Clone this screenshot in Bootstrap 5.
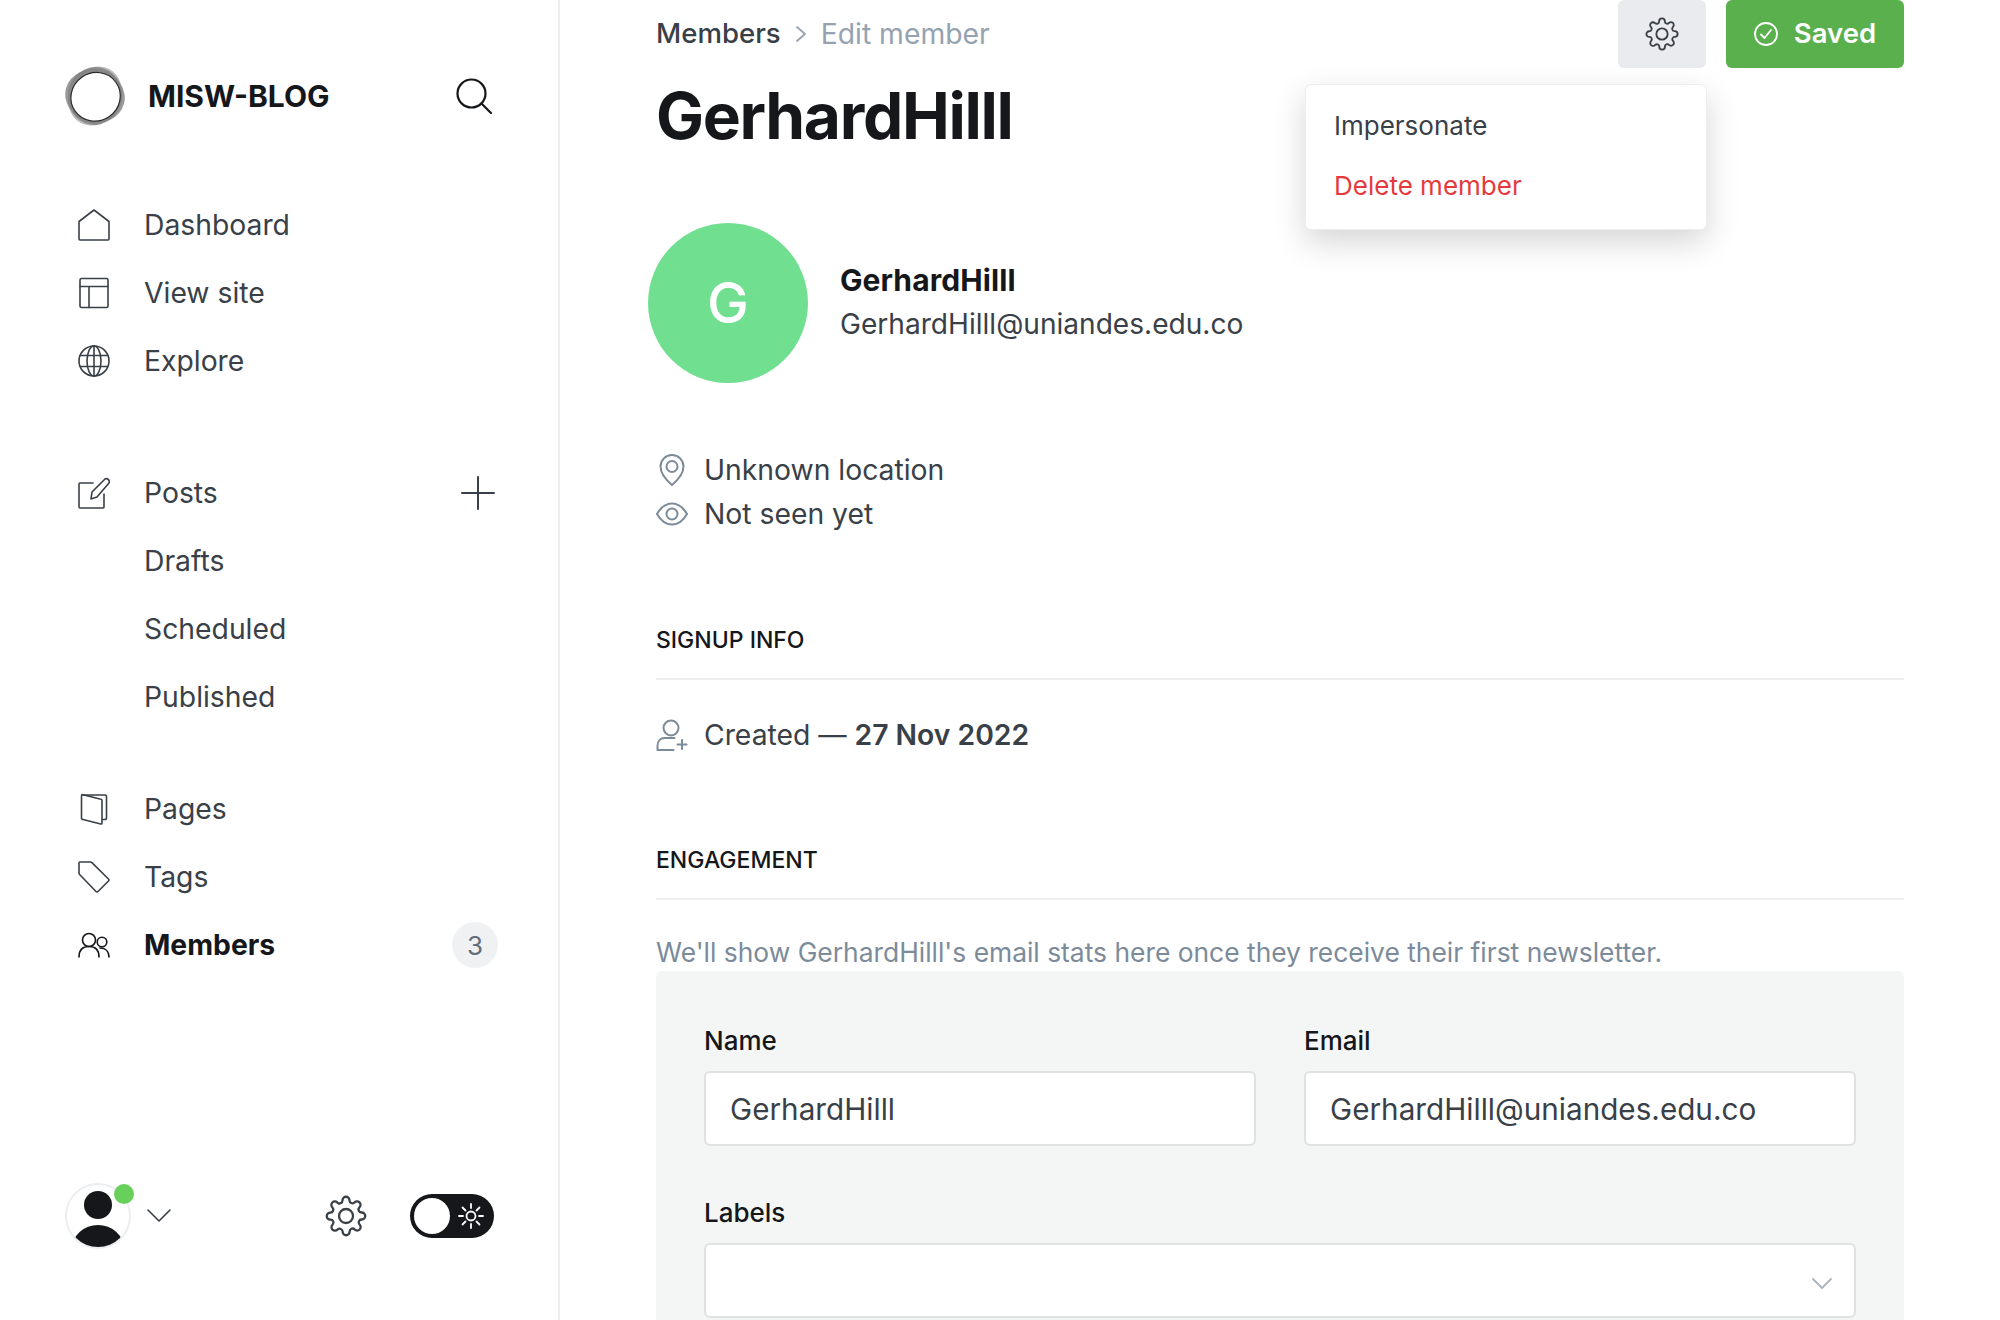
<!DOCTYPE html>
<html lang="en">
<head>
    <meta charset="UTF-8">
    <title>Edit member - MISW-BLOG</title>
    <link href="https://cdn.jsdelivr.net/npm/bootstrap@5.3.0/dist/css/bootstrap.min.css" rel="stylesheet">
    <script src="https://cdn.jsdelivr.net/npm/bootstrap@5.3.0/dist/js/bootstrap.bundle.min.js"></script>
    <style>
        html, body { height: 1320px; overflow: hidden; }
        body { font-family: Inter, "Liberation Sans", sans-serif; font-size: 28.3px; color: #394047; background: #fff; }
        svg { display: block; flex: none; }
        .ln { fill: none; stroke: currentColor; stroke-width: 1.6; stroke-linecap: round; stroke-linejoin: round; }

        .side { width: 560px; height: 1320px; border-right: 2px solid #eceef0; padding: 66px 60px 0 65px; }
        .brand { height: 60px; }
        .brand-name { font-size: 30px; font-weight: 700; color: #15171a; margin-left: 23px; }
        .brand-find { margin-right: 6px; }
        .side-nav { margin-top: 65px; }
        .side-group { margin-bottom: 64px; }
        .side-group + .side-group { margin-bottom: 44px; }
        .side-row { height: 68px; color: #394047; text-decoration: none; padding-left: 13px; }
        .side-row .ico { width: 32px; margin-right: 34px; color: #394047; }
        .side-row.sub { padding-left: 79px; }
        .side-row.now { font-weight: 700; color: #15171a; }
        .side-row.now .ico { color: #15171a; }
        .side-plus { margin-right: 3px; }
        .side-count { width: 46px; height: 46px; background: #eff1f3; color: #626d79; font-size: 26px; margin-right: 0; }
        .side-foot { height: 66px; margin-bottom: 71px; }
        .me { width: 66px; height: 66px; border: 2px solid #ebeef0; background: #fff; overflow: hidden; }
        .me-wrap { width: 66px; height: 66px; }
        .me-dot { width: 20px; height: 20px; background: #68cf5a; top: 1px; left: 49px; }
        .mode { width: 84px; height: 44px; background: #15171a; padding: 4px; margin-right: 4px; margin-left: 43px; }
        .mode-knob { width: 36px; height: 36px; background: #fff; }

        .page { padding: 0 96px 0 96px; }
        .top-bar { height: 68px; }
        .crumb-now { color: #394047; font-size: 27.6px; font-weight: 500; }
        .crumb-sep { color: #95a2b0; margin: 0 14px; }
        .crumb-end { color: #95a2b0; }
        .gear-btn { width: 88px; height: 68px; background: #e9ebee; border-radius: 6px; color: #394047; }
        .save-btn.btn { width: 178px; height: 68px; margin-left: 20px; background: #5bb04e; border-radius: 6px; color: #fff; font-weight: 600; font-size: 27.5px; }
        .actions { width: 402px; top: 84px; left: 1305px; height: 146px; background: #fff; border-radius: 6px; border: 1px solid #eceef0; box-shadow: 0 12px 32px rgba(0,0,0,.17); padding: 10px 28px; font-size: 26px; }
        .actions div { height: 60px; }
        .danger { color: #e43a3d; }
        .who-title { font-size: 64px; font-weight: 700; color: #15171a; letter-spacing: -1.3px; line-height: 1; margin-top: 16px; }
        .who { margin-top: 75px; margin-left: -8px; }
        .who-pic { width: 160px; height: 160px; background: #70df8f; color: #fff; font-size: 56px; font-weight: 500; margin-right: 32px; }
        .who-text { padding-bottom: 2px; }
        .who-name { font-size: 30px; font-weight: 700; color: #15171a; letter-spacing: .1px; line-height: 44px; }
        .who-mail { line-height: 44px; font-size: 28.1px; }
        .facts { margin-top: 65px; }
        .fact { height: 44px; }
        .fact .ico { width: 32px; margin-right: 16px; color: #7c8b9a; }
        .fact .ln { stroke-width: 2; }
        .sect { font-size: 23px; font-weight: 500; color: #15171a; line-height: 30px; padding-bottom: 23px; border-bottom: 2px solid #eceef0; }
        .sect-first { margin-top: 89px; }
        .sect-next { margin-top: 88px; }
        .fact-single { margin-top: 33px; }
        .hint { color: #7c8b9a; font-size: 26.4px; line-height: 38px; margin-top: 33px; }
        .form-box { background: #f4f6f6; border-radius: 6px; padding: 51px 48px; height: 400px; }
        .form-box .form-label { font-size: 26px; font-weight: 500; color: #15171a; margin-bottom: 0; line-height: 38px; }
        .form-box .form-control { height: 75px; font-size: 29.7px; color: #394047; border: 2px solid #dfe1e3; border-radius: 6px; padding: 0 24px; font-family: inherit; margin-top: 11px; }
        .form-half { width: 552px; }
        .form-next { margin-top: 48px; }
        .pick-arrow { right: 24px; top: 35px; color: #abb4be; }
    </style>
</head>
<body>
<svg width="0" height="0" class="position-absolute">
    <symbol id="gear" viewBox="0 0 24 24">
        <circle cx="12" cy="12" r="4"/>
        <path d="M19.4 15a1.65 1.65 0 0 0 .33 1.82l.06.06a2 2 0 0 1 0 2.83 2 2 0 0 1-2.83 0l-.06-.06a1.65 1.65 0 0 0-1.82-.33 1.65 1.65 0 0 0-1 1.51V21a2 2 0 0 1-2 2 2 2 0 0 1-2-2v-.09A1.65 1.65 0 0 0 9 19.4a1.65 1.65 0 0 0-1.82.33l-.06.06a2 2 0 0 1-2.83 0 2 2 0 0 1 0-2.83l.06-.06a1.65 1.65 0 0 0 .33-1.82 1.65 1.65 0 0 0-1.51-1H3a2 2 0 0 1-2-2 2 2 0 0 1 2-2h.09A1.65 1.65 0 0 0 4.6 9a1.65 1.65 0 0 0-.33-1.82l-.06-.06a2 2 0 0 1 0-2.83 2 2 0 0 1 2.83 0l.06.06a1.65 1.65 0 0 0 1.82.33H9a1.65 1.65 0 0 0 1-1.51V3a2 2 0 0 1 2-2 2 2 0 0 1 2 2v.09a1.65 1.65 0 0 0 1 1.51 1.65 1.65 0 0 0 1.82-.33l.06-.06a2 2 0 0 1 2.83 0 2 2 0 0 1 0 2.83l-.06.06a1.65 1.65 0 0 0-.33 1.82V9a1.65 1.65 0 0 0 1.51 1H21a2 2 0 0 1 2 2 2 2 0 0 1-2 2h-.09a1.65 1.65 0 0 0-1.51 1z"/>
    </symbol>
</svg>

<div class="d-flex">
    <aside class="side d-flex flex-column flex-shrink-0">
        <div class="brand d-flex align-items-center">
            <svg width="60" height="60" viewBox="0 0 60 60">
                <ellipse cx="30" cy="30" rx="30.500" ry="26" transform="rotate(-62 30 30)" fill="#bdbdbd"/>
                <ellipse cx="30" cy="30" rx="30" ry="26.500" transform="rotate(15 30 30)" fill="#999"/>
                <ellipse cx="30" cy="30" rx="29" ry="27" transform="rotate(-80 30 30)" fill="#777" opacity=".7"/>
                <circle cx="30" cy="30.500" r="26.500" fill="#888"/>
                <ellipse cx="30" cy="31" rx="25" ry="24" transform="rotate(-35 30 30)" fill="#fff" stroke="#2a2a2a" stroke-width="1.200"/>
            </svg>
            <span class="brand-name">MISW-BLOG</span>
            <svg class="brand-find ms-auto" width="36" height="36" viewBox="0 0 36 36" fill="none" stroke="#15171a" stroke-width="2.2" stroke-linecap="round">
                <circle cx="15.5" cy="15.5" r="14"/><path d="M25.5 25.5 35 35"/>
            </svg>
        </div>

        <nav class="side-nav flex-grow-1">
            <div class="side-group">
                <a href="#" class="side-row d-flex align-items-center">
                    <span class="ico"><svg width="32" height="32" viewBox="0 0 32 32" class="ln"><path d="M1 12.5 16 1l15 11.500V30a1 1 0 0 1-1 1H2a1 1 0 0 1-1-1z"/></svg></span>Dashboard
                </a>
                <a href="#" class="side-row d-flex align-items-center">
                    <span class="ico"><svg width="32" height="32" viewBox="0 0 32 32" class="ln"><rect x="2" y="1.500" width="28" height="29" rx="1.500"/><path d="M2 9.500h28M11 9.500v21"/></svg></span>View site
                </a>
                <a href="#" class="side-row d-flex align-items-center">
                    <span class="ico"><svg width="32" height="32" viewBox="0 0 32 32" class="ln"><circle cx="16" cy="16" r="15"/><ellipse cx="16" cy="16" rx="7" ry="15"/><path d="M16 1v30M2.500 10.500h27M2.500 21.500h27"/></svg></span>Explore
                </a>
            </div>
            <div class="side-group">
                <a href="#" class="side-row d-flex align-items-center">
                    <span class="ico"><svg width="32" height="32" viewBox="0 0 32 32" class="ln"><path d="M15 6H2a1 1 0 0 0-1 1v23a1 1 0 0 0 1 1h23a1 1 0 0 0 1-1V17"/><path d="M13 22l1-7L27 2a3 3 0 0 1 4 4L19 20z"/></svg></span>Posts
                    <svg class="side-plus ms-auto" width="34" height="34" viewBox="0 0 34 34" stroke="#394047" stroke-width="2" stroke-linecap="round"><path d="M17 1v32M1 17h32"/></svg>
                </a>
                <a href="#" class="side-row sub d-flex align-items-center">Drafts</a>
                <a href="#" class="side-row sub d-flex align-items-center">Scheduled</a>
                <a href="#" class="side-row sub d-flex align-items-center">Published</a>
            </div>
            <div>
                <a href="#" class="side-row d-flex align-items-center">
                    <span class="ico"><svg width="32" height="32" viewBox="0 0 32 32" class="ln"><path d="M5 2h22a1.500 1.500 0 0 1 1.500 1.500V25a1.500 1.500 0 0 1-1.500 1.500h-3"/><path d="M4 1.500 22 6a2 2 0 0 1 2 2v22a1 1 0 0 1-1.300 1L5 26.500a1.500 1.500 0 0 1-1.500-1.500V3z"/></svg></span>Pages
                </a>
                <a href="#" class="side-row d-flex align-items-center">
                    <span class="ico"><svg width="32" height="32" viewBox="0 0 32 32" class="ln"><path d="M2 1h10.500a2 2 0 0 1 1.400.600L30.500 18a1.500 1.500 0 0 1 0 2L20 30.500a1.500 1.500 0 0 1-2 0L1.600 13.500A2 2 0 0 1 1 12V2a1 1 0 0 1 1-1z"/></svg></span>Tags
                </a>
                <a href="#" class="side-row now d-flex align-items-center">
                    <span class="ico"><svg width="32" height="32" viewBox="0 0 32 32" class="ln"><circle cx="11" cy="11" r="6.500"/><circle cx="24" cy="13" r="4.800"/><path d="M1 28c0-7 4-10.500 10-10.500S21 21 21 28M22 19c5 0 9 3 9 9"/></svg></span>Members
                    <span class="side-count ms-auto rounded-circle d-flex align-items-center justify-content-center fw-normal">3</span>
                </a>
            </div>
        </nav>

        <div class="side-foot d-flex align-items-center">
            <div class="me-wrap position-relative">
                <div class="me rounded-circle position-relative">
                    <svg width="62" height="62" viewBox="0 0 62 62" fill="#15171a"><circle cx="31" cy="20" r="14"/><ellipse cx="31" cy="64" rx="26" ry="24"/></svg>
                </div>
                <span class="me-dot position-absolute rounded-circle"></span>
            </div>
            <svg class="ms-3" width="24" height="14" viewBox="0 0 24 14" fill="none" stroke="#394047" stroke-width="1.600" stroke-linecap="round" stroke-linejoin="round"><path d="M1 1l11 11L23 1"/></svg>
            <svg class="ms-auto" width="42" height="42" viewBox="0 0 24 24" fill="none" stroke="#394047" stroke-width="1.300"><use href="#gear"/></svg>
            <div class="mode d-flex align-items-center rounded-pill">
                <span class="mode-knob rounded-circle"></span>
                <svg class="ms-2" width="26" height="26" viewBox="0 0 26 26" fill="none" stroke="#fff" stroke-width="1.800" stroke-linecap="round"><circle cx="13" cy="13" r="4.500"/><path d="M13 1v4M13 21v4M1 13h4M21 13h4M4.500 4.500l3 3M18.500 18.500l3 3M4.500 21.500l3-3M18.500 7.500l3-3"/></svg>
            </div>
        </div>
    </aside>

    <main class="page flex-grow-1">
        <div class="top-bar d-flex align-items-center">
            <span class="crumb-now">Members</span>
            <svg class="crumb-sep" width="12" height="18" viewBox="0 0 12 18" fill="none" stroke="currentColor" stroke-width="1.800" stroke-linecap="round" stroke-linejoin="round"><path d="M2 2l8 7-8 7"/></svg>
            <span class="crumb-end">Edit member</span>
            <button class="gear-btn btn ms-auto d-flex align-items-center justify-content-center p-0 border-0">
                <svg width="34" height="34" viewBox="0 0 24 24" fill="none" stroke="currentColor" stroke-width="1.300"><use href="#gear"/></svg>
            </button>
            <button class="save-btn btn d-flex align-items-center justify-content-center p-0 border-0">
                <svg class="me-3" width="24" height="24" viewBox="0 0 24 24" fill="none" stroke="#fff" stroke-width="1.800" stroke-linecap="round" stroke-linejoin="round"><circle cx="12" cy="12" r="11"/><path d="M7 12.500l3.500 3.500L17 8"/></svg>Saved
            </button>
        </div>

        <div class="actions position-absolute">
            <div class="d-flex align-items-center">Impersonate</div>
            <div class="danger d-flex align-items-center">Delete member</div>
        </div>

        <h1 class="who-title mb-0">GerhardHilll</h1>

        <div class="who d-flex align-items-center">
            <div class="who-pic rounded-circle d-flex align-items-center justify-content-center">G</div>
            <div class="who-text">
                <div class="who-name">GerhardHilll</div>
                <div class="who-mail">GerhardHilll@uniandes.edu.co</div>
            </div>
        </div>

        <div class="facts">
            <div class="fact d-flex align-items-center">
                <span class="ico d-flex justify-content-center"><svg width="26" height="32" viewBox="0 0 26 32" class="ln"><path d="M13 31C6 25 1.500 19 1.500 12.500a11.500 11.500 0 0 1 23 0C24.500 19 20 25 13 31z"/><circle cx="13" cy="12.500" r="5.500"/></svg></span>Unknown location
            </div>
            <div class="fact d-flex align-items-center">
                <span class="ico d-flex justify-content-center"><svg width="32" height="24" viewBox="0 0 32 24" class="ln"><path d="M1 12C5 5 10 1.500 16 1.500S27 5 31 12c-4 7-9 10.500-15 10.500S5 19 1 12z"/><circle cx="16" cy="12" r="5.500"/></svg></span>Not seen yet
            </div>
        </div>

        <div class="sect sect-first text-uppercase">Signup info</div>
        <div class="fact fact-single d-flex align-items-center">
            <span class="ico d-flex justify-content-center"><svg width="32" height="32" viewBox="0 0 32 32" class="ln"><circle cx="15" cy="9" r="7.500"/><path d="M1.500 31v-4c0-5 3-8 7-8h10M1.500 31h16M26 21v9M21.500 25.500h9"/></svg></span>
            <span>Created — <span class="fw-semibold">27 Nov 2022</span></span>
        </div>

        <div class="sect sect-next text-uppercase">Engagement</div>
        <div class="hint">We'll show GerhardHilll's email stats here once they receive their first newsletter.</div>

        <form class="form-box">
            <div class="d-flex justify-content-between">
                <div class="form-half">
                    <label class="form-label d-block">Name</label>
                    <input type="text" class="form-control" value="GerhardHilll">
                </div>
                <div class="form-half">
                    <label class="form-label d-block">Email</label>
                    <input type="text" class="form-control" value="GerhardHilll@uniandes.edu.co">
                </div>
            </div>
            <div class="form-next">
                <label class="form-label d-block">Labels</label>
                <div class="position-relative">
                    <input type="text" class="form-control">
                    <svg class="pick-arrow position-absolute" width="20" height="12" viewBox="0 0 20 12" fill="none" stroke="currentColor" stroke-width="1.800" stroke-linecap="round" stroke-linejoin="round"><path d="M1 1l9 9 9-9"/></svg>
                </div>
            </div>
        </form>
    </main>
</div>
</body>
</html>
